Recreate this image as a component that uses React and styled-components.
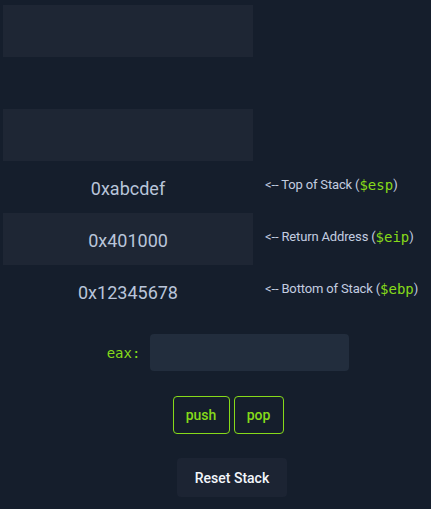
import React from 'react';
import styled, { createGlobalStyle } from 'styled-components';

const GlobalStyle = createGlobalStyle`
    html, body {
        margin: 0;
        padding: 0;
        background: #151e2c;
    }
    body {
        font-family: Roboto, "Liberation Sans", sans-serif;
        color: #b9c5da;
    }
`;

const Page = styled.div`
    width: 431px;
    min-height: 509px;
    box-sizing: border-box;
    padding: 5px 0 0 3px;
`;

const Stack = styled.div`
    display: grid;
    grid-template-columns: 250px auto;
    grid-auto-rows: 52px;
    column-gap: 12px;
`;

const Cell = styled.div`
    display: flex;
    align-items: center;
    justify-content: center;
    padding-top: 2px;
    background: ${p => (p.$filled ? '#1e2634' : 'transparent')};
    font-size: 18px;
    color: #b9c5da;
`;

const Pointer = styled.div`
    display: flex;
    align-items: center;
    padding-bottom: 5px;
    font-size: 13px;
    letter-spacing: -0.15px;
    color: #c3cde0;
    white-space: nowrap;
`;

const Reg = styled.span`
    font-family: "DejaVu Sans Mono", "Liberation Mono", monospace;
    font-size: 14px;
    letter-spacing: 0;
    color: #86da1a;
`;

const Controls = styled.div`
    display: flex;
    flex-direction: column;
    align-items: center;
    padding-left: 24px;
    padding-top: 17px;
`;

const RegisterRow = styled.div`
    display: flex;
    align-items: center;
    gap: 10px;
    margin-left: -2px;
`;

const RegLabel = styled.label`
    font-family: "DejaVu Sans Mono", "Liberation Mono", monospace;
    font-size: 14px;
    color: #86da1a;
`;

const RegInput = styled.input`
    width: 199px;
    height: 37px;
    box-sizing: border-box;
    border: none;
    border-radius: 4px;
    background: #222d3d;
    outline: none;
`;

const ButtonRow = styled.div`
    display: flex;
    gap: 4px;
    margin-top: 25px;
    margin-left: -2px;
`;

const OpButton = styled.button`
    width: ${p => p.$width}px;
    height: 38px;
    padding: 0;
    border: 1px solid #86da1a;
    border-radius: 4px;
    background: transparent;
    color: #86da1a;
    font-family: Roboto, "Liberation Sans", sans-serif;
    font-weight: 500;
    font-size: 14px;
`;

const ResetButton = styled.button`
    margin-top: 24px;
    margin-left: 6px;
    width: 110px;
    height: 39px;
    border: none;
    border-radius: 4px;
    background: #1c2433;
    color: #f3f6fb;
    font-family: Roboto, "Liberation Sans", sans-serif;
    font-weight: 500;
    font-size: 14px;
`;

const rows = [
    { value: '', filled: true },
    { value: '', filled: false },
    { value: '', filled: true },
    { value: '0xabcdef', filled: false, label: 'Top of Stack', reg: '$esp' },
    { value: '0x401000', filled: true, label: 'Return Address', reg: '$eip' },
    { value: '0x12345678', filled: false, label: 'Bottom of Stack', reg: '$ebp' },
];

export default function App() {
    return (
        <Page>
            <GlobalStyle />
            <Stack>
                {rows.map((row, i) => (
                    <React.Fragment key={i}>
                        <Cell $filled={row.filled}>{row.value}</Cell>
                        <Pointer>
                            {row.label && (
                                <>
                                    &lt;-- {row.label} (<Reg>{row.reg}</Reg>)
                                </>
                            )}
                        </Pointer>
                    </React.Fragment>
                ))}
            </Stack>

            <Controls>
                <RegisterRow>
                    <RegLabel>eax:</RegLabel>
                    <RegInput type="text" />
                </RegisterRow>
                <ButtonRow>
                    <OpButton $width={57}>push</OpButton>
                    <OpButton $width={50}>pop</OpButton>
                </ButtonRow>
                <ResetButton>Reset Stack</ResetButton>
            </Controls>
        </Page>
    );
}
